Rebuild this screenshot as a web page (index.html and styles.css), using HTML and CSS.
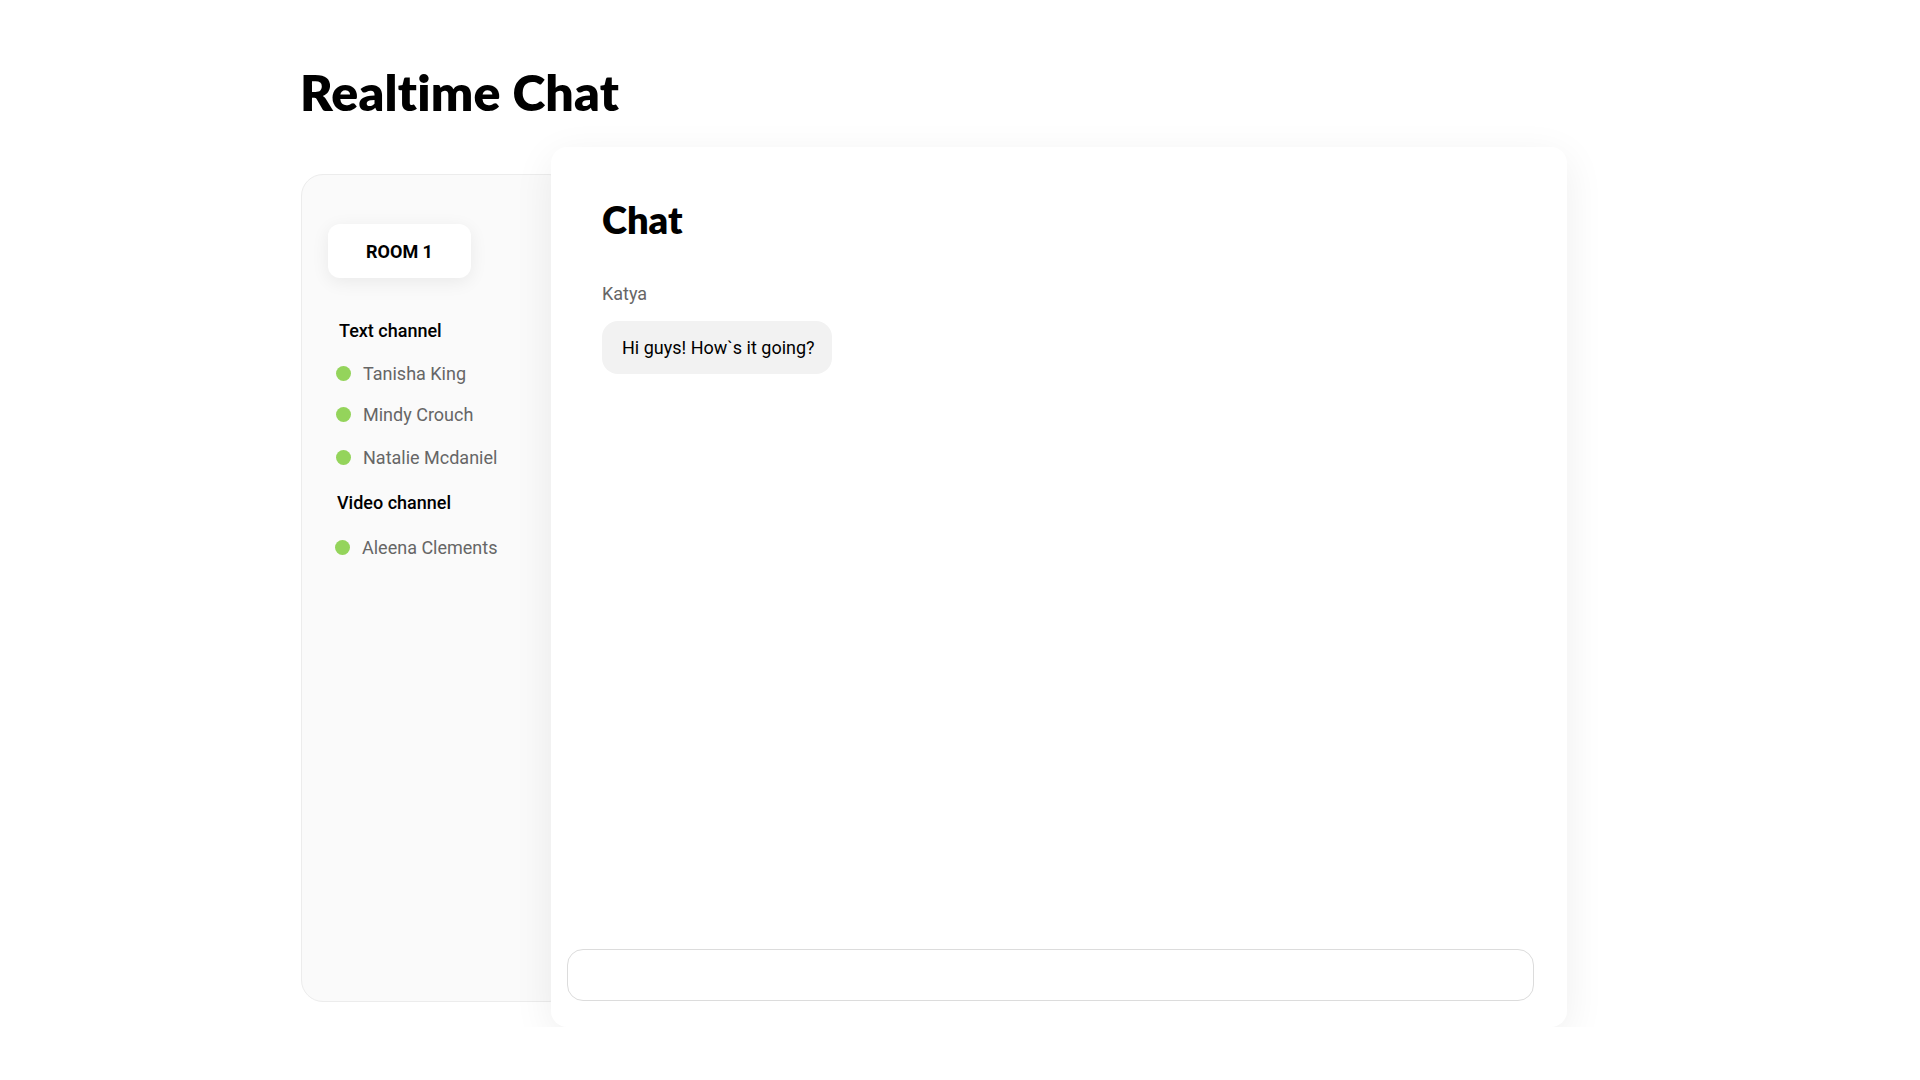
FILE: index.html
```html
<!DOCTYPE html>
<html>
<head>
<meta charset="utf-8">
<link rel="stylesheet" href="styles.css">
</head>
<body>
<div class="page">
  <h1 class="title">Realtime Chat</h1>
  <div class="layout">
    <aside class="sidebar">
      <div class="room">ROOM 1</div>
      <div class="section-title text-title">Text channel</div>
      <ul class="users">
        <li class="user user-first"><span class="dot"></span>Tanisha King</li>
        <li class="user user-mid"><span class="dot"></span>Mindy Crouch</li>
        <li class="user user-last"><span class="dot"></span>Natalie Mcdaniel</li>
      </ul>
      <div class="section-title video-title">Video channel</div>
      <ul class="users">
        <li class="user user-video"><span class="dot"></span>Aleena Clements</li>
      </ul>
    </aside>
    <main class="chat">
      <h2 class="chat-title">Chat</h2>
      <div class="messages">
        <div class="author">Katya</div>
        <div class="bubble">Hi guys! How`s it going?</div>
      </div>
      <input class="input" type="text">
    </main>
  </div>
</div>
</body>
</html>
```
FILE: styles.css
```css
* { box-sizing: border-box; }
html, body { margin: 0; padding: 0; background: #fff; }
body { font-family: Roboto, "Liberation Sans", sans-serif; color: #000; }
.page { padding: 62px 0 0 301px; }
.title {
  margin: 0 0 0 -1px;
  font-family: "Lato", "Inter", sans-serif;
  font-weight: 800;
  font-size: 50px;
  line-height: 60px;
  letter-spacing: 0.2px;
}
.layout { display: flex; align-items: flex-start; margin-top: 25px; }
.sidebar {
  width: 270px;
  height: 828px;
  margin-top: 27px;
  background: #fafafa;
  border: 1px solid #ececec;
  border-radius: 22px;
  padding: 49px 0 0 26px;
  flex-shrink: 0;
}
.room {
  width: 143px;
  height: 54px;
  background: #fff;
  border-radius: 12px;
  box-shadow: 0 4px 18px rgba(0,0,0,0.07);
  display: flex;
  align-items: center;
  justify-content: center;
  font-weight: 700;
  font-size: 18px;
}
.section-title { font-size: 18px; font-weight: 500; line-height: 20px; }
.text-title { margin: 43px 0 0 11px; }
.video-title { margin: 25px 0 0 9px; }
.users { list-style: none; margin: 0; padding: 0; }
.user {
  display: flex;
  align-items: center;
  font-size: 18px;
  color: #666;
  line-height: 21px;
  padding-left: 8px;
}
.user-first { margin-top: 22px; }
.user-mid { margin-top: 20px; }
.user-last { margin-top: 22px; }
.user-video { margin-top: 24px; padding-left: 7px; }
.dot {
  width: 15px; height: 15px; border-radius: 50%;
  background: #94d45b;
  margin-right: 12px;
  flex-shrink: 0;
}
.chat {
  position: relative;
  margin-left: -20px;
  width: 1016px;
  height: 880px;
  background: #fff;
  border-radius: 16px;
  box-shadow: 0 10px 40px rgba(0,0,0,0.07);
  padding: 49px 33px 26px 16px;
  display: flex;
  flex-direction: column;
}
.chat-title {
  margin: 0 0 0 35px;
  font-family: "Lato", "Inter", sans-serif;
  font-weight: 800;
  font-size: 38px;
  line-height: 46px;
}
.messages { flex: 1; padding-left: 35px; padding-top: 41px; }
.author { font-size: 18px; color: #666; line-height: 22px; }
.bubble {
  display: inline-block;
  margin-top: 16px;
  background: #f2f2f2;
  border-radius: 16px;
  padding: 16px 17px 16px 20px;
  font-size: 18px;
  line-height: 21px;
}
.input {
  width: 967px;
  height: 52px;
  border: 1px solid #dcdcdc;
  border-radius: 16px;
  background: #fff;
  outline: none;
  font-family: inherit;
  font-size: 18px;
  padding: 0 20px;
}
```
